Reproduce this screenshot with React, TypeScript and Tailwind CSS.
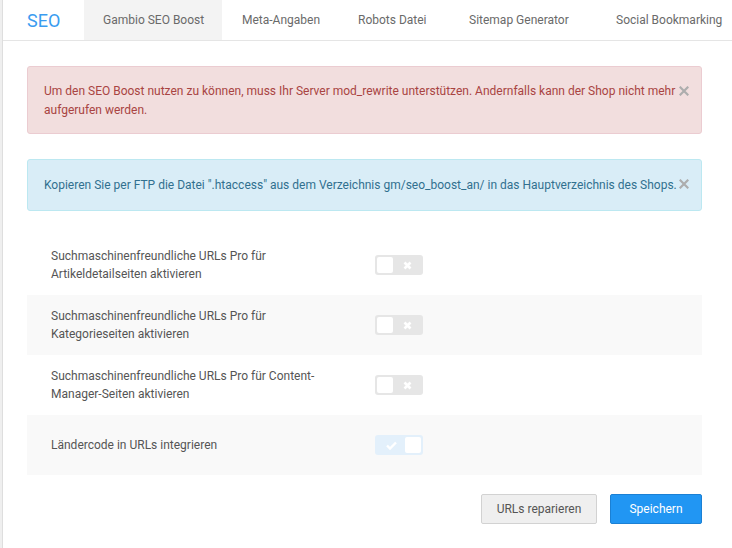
import React from "react";

const tabs = [
  { label: "Gambio SEO Boost", w: "w-[138px] pl-[19px]", active: true },
  { label: "Meta-Angaben", w: "w-[116px] pl-[20px]", active: false },
  { label: "Robots Datei", w: "w-[108px] pl-[20px]", active: false },
  { label: "Sitemap Generator", w: "w-[146px] pl-[23px]", active: false },
  { label: "Social Bookmarking", w: "w-[150px] pl-[24px]", active: false },
];

const settings = [
  { label: "Suchmaschinenfreundliche URLs Pro für Artikeldetailseiten aktivieren", on: false },
  { label: "Suchmaschinenfreundliche URLs Pro für Kategorieseiten aktivieren", on: false },
  { label: "Suchmaschinenfreundliche URLs Pro für Content-Manager-Seiten aktivieren", on: false },
  { label: "Ländercode in URLs integrieren", on: true },
];

function CloseIcon({ className }: { className: string }) {
  return (
    <svg width="10" height="10" viewBox="0 0 10 10" className={`shrink-0 ${className}`}>
      <path d="M1.5 1.5 L8.5 8.5 M8.5 1.5 L1.5 8.5" stroke="#adadad" strokeWidth="2.2" strokeLinecap="square" />
    </svg>
  );
}

function Toggle({ on }: { on: boolean }) {
  if (on) {
    return (
      <div className="w-[48px] h-[20px] rounded-[3px] bg-[#e3f0fb] flex items-center justify-between pl-[11px] pr-[2px]">
        <svg width="11" height="9" viewBox="0 0 11 9">
          <path d="M1 4.5 L4 7.5 L10 1.5" fill="none" stroke="#ffffff" strokeWidth="2.4" />
        </svg>
        <div className="w-[16px] h-[16px] rounded-[2px] bg-white" />
      </div>
    );
  }
  return (
    <div className="w-[48px] h-[20px] rounded-[3px] bg-[#e6e6e6] flex items-center pl-[2px]">
      <div className="w-[16px] h-[16px] rounded-[2px] bg-white" />
      <svg width="9" height="9" viewBox="0 0 9 9" className="ml-[10px]">
        <path d="M1.5 1.5 L7.5 7.5 M7.5 1.5 L1.5 7.5" stroke="#ffffff" strokeWidth="2.6" />
      </svg>
    </div>
  );
}

export default function App() {
  return (
    <div className="w-[732px] h-[548px] bg-white flex overflow-hidden font-['Roboto',sans-serif] text-[12px]">
      <div className="w-[3px] shrink-0 bg-[#efefef] border-r border-[#dedede]" />
      <div className="flex-1 flex flex-col min-w-0">
        <div className="h-[41px] flex border-b border-[#e5e5e5] shrink-0 overflow-hidden">
          <div className="w-[81px] shrink-0 pl-[24px] flex items-center text-[18px] text-[#3a9cf0]">SEO</div>
          {tabs.map((t) => (
            <div
              key={t.label}
              className={`${t.w} shrink-0 whitespace-nowrap flex items-center text-[#6a6a6a] ${t.active ? "bg-[#f3f3f3]" : ""}`}
            >
              {t.label}
            </div>
          ))}
        </div>

        <div className="ml-[24px] w-[675px] flex flex-col">
          <div className="mt-[25px] flex pl-4 pr-[12px] pt-[15px] pb-[13px] bg-[#f2dede] border border-[#ebccd1] rounded-[3px] text-[#a94442] leading-[19px]">
            <p className="flex-1">
              Um den SEO Boost nutzen zu können, muss Ihr Server mod_rewrite unterstützen. Andernfalls kann der Shop nicht mehr aufgerufen werden.
            </p>
            <CloseIcon className="mt-[4px]" />
          </div>

          <div className="mt-[25px] h-[52px] flex items-center pl-4 pr-[12px] bg-[#d9edf7] border border-[#bce8f1] rounded-[3px] text-[#31708f] leading-[19px]">
            <p className="flex-1 pt-[1px]">
              Kopieren Sie per FTP die Datei ".htaccess" aus dem Verzeichnis gm/seo_boost_an/ in das Hauptverzeichnis des Shops.
            </p>
            <CloseIcon className="-mt-[2px]" />
          </div>

          <div className="mt-[24px] flex flex-col">
            {settings.map((s, i) => (
              <div
                key={s.label}
                className={`h-[60px] grid grid-cols-[348px_1fr] items-center ${i % 2 === 1 ? "bg-[#f9f9f9]" : ""}`}
              >
                <div className="pl-[24px] pr-[40px] text-[#555555] leading-[18px]">{s.label}</div>
                <Toggle on={s.on} />
              </div>
            ))}
          </div>

          <div className="mt-[19px] flex justify-end gap-[13px]">
            <button className="w-[116px] h-[30px] bg-[#efefef] border border-[#d2d2d2] rounded-[2px] text-[#555555]">
              URLs reparieren
            </button>
            <button className="w-[92px] h-[30px] bg-[#2196f3] border border-[#1b80d4] rounded-[2px] text-white">
              Speichern
            </button>
          </div>
        </div>
      </div>
    </div>
  );
}
